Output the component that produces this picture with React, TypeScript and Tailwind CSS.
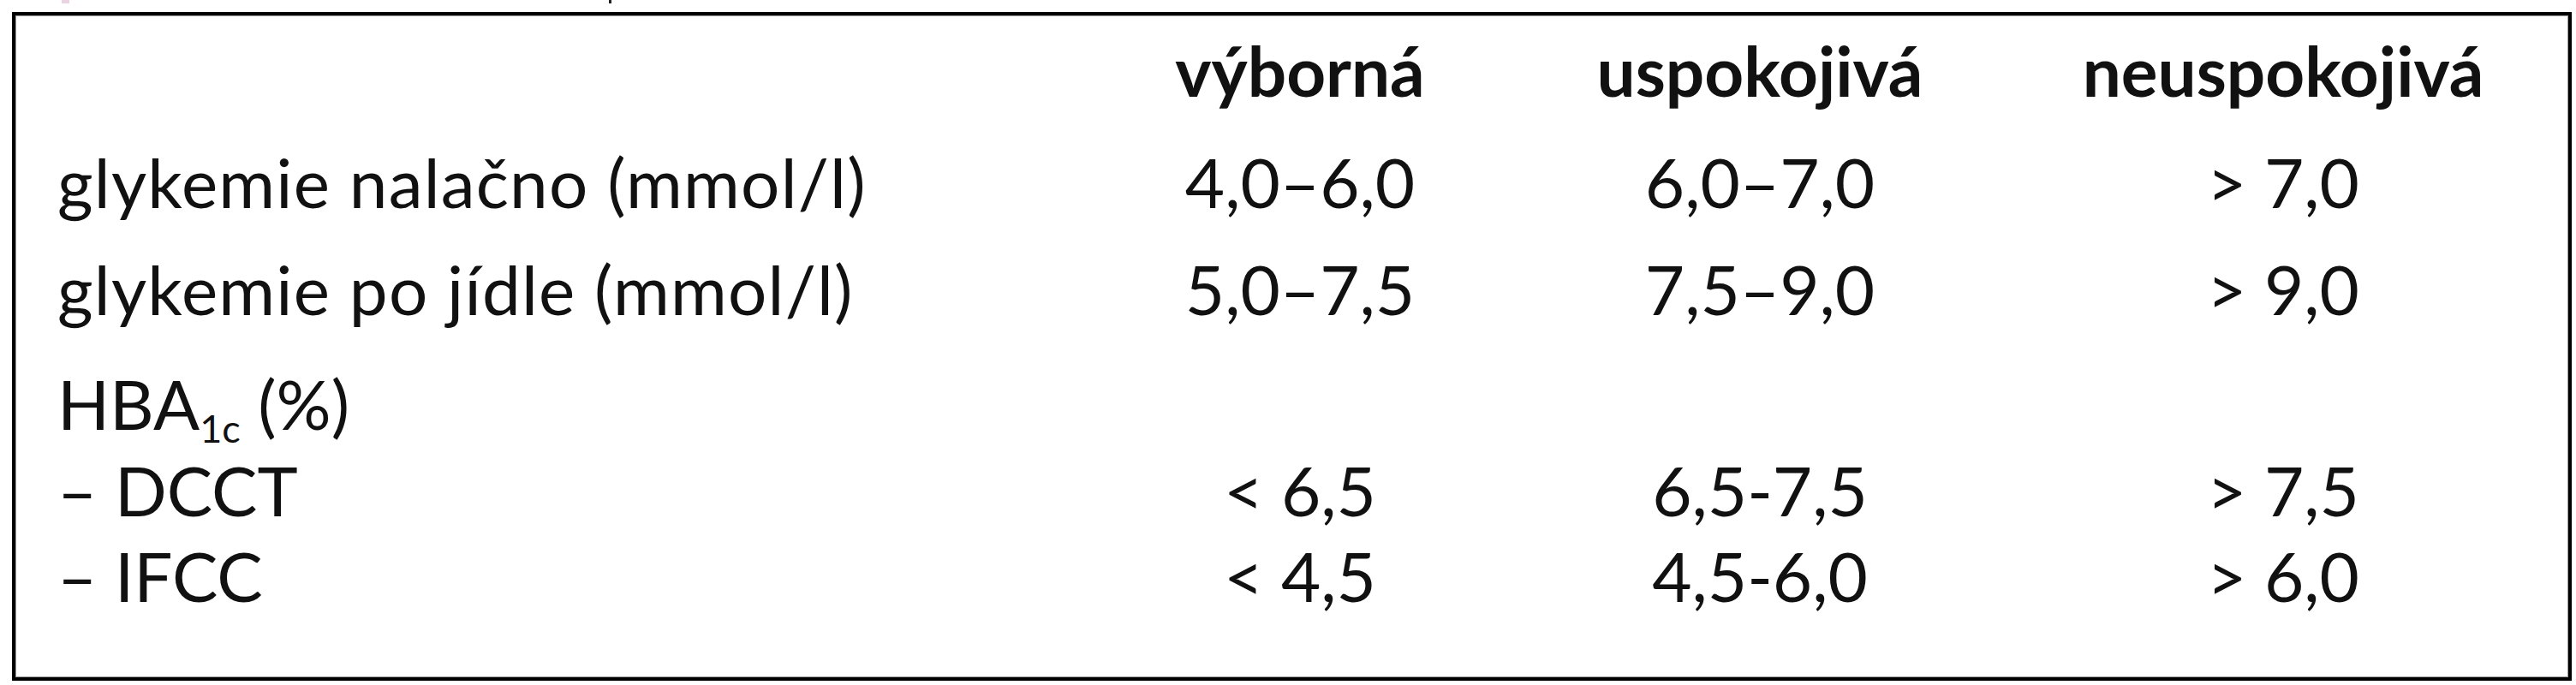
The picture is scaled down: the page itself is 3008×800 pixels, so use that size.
import React from "react";

const font = { fontFamily: "Lato, 'Noto Sans', sans-serif" };

type Row = { label: React.ReactNode; v: [string, string, string]; mt: string };

export default function App() {
  const rows: Row[] = [
    { label: "glykemie nalačno (mmol/l)", v: ["4,0–6,0", "6,0–7,0", "> 7,0"], mt: "mt-[30px]" },
    { label: "glykemie po jídle (mmol/l)", v: ["5,0–7,5", "7,5–9,0", "> 9,0"], mt: "mt-[25px]" },
  ];
  return (
    <div className="w-[3008px] h-[800px] bg-white text-[#111]" style={font}>
      <div className="h-[14px] flex items-start">
        <div className="ml-[72px] w-[9px] h-[4px] bg-[#ead3e2]" />
        <div className="ml-[630px] w-[3px] h-[4px] bg-[#222]" />
      </div>
      <div className="ml-[14px] w-[2989px] h-[781px] border-4 border-black shadow-[inset_0_0_0_1px_#9a9a9a] pt-[14px] pl-[49px]">
        <div className="grid grid-cols-[1183px_536px_538px_684px] h-[100px] leading-[100px] text-[80px] font-bold">
          <div />
          <div className="text-center">výborná</div>
          <div className="text-center">uspokojivá</div>
          <div className="text-center">neuspokojivá</div>
        </div>
        {rows.map((r, i) => (
          <div key={i} className={`grid grid-cols-[1183px_536px_538px_684px] h-[100px] leading-[100px] text-[80px] ${r.mt}`}>
            <div className="tracking-[1.2px]">{r.label}</div>
            <div className="text-center">{r.v[0]}</div>
            <div className="text-center">{r.v[1]}</div>
            <div className="text-center">{r.v[2]}</div>
          </div>
        ))}
        <div className="grid grid-cols-[1183px_536px_538px_684px] h-[100px] leading-[100px] text-[80px] mt-[34px]">
          <div>
            HBA<span className="text-[45px] align-[-15px]">1c</span> (%)
          </div>
          <div />
          <div />
          <div />
        </div>
        <div className="grid grid-cols-[1183px_536px_538px_684px] h-[100px] leading-[100px] text-[80px] mt-[1px]">
          <div>– DCCT</div>
          <div className="text-center">&lt; 6,5</div>
          <div className="text-center">6,5-7,5</div>
          <div className="text-center">&gt; 7,5</div>
        </div>
        <div className="grid grid-cols-[1183px_536px_538px_684px] h-[100px] leading-[100px] text-[80px]">
          <div>– IFCC</div>
          <div className="text-center">&lt; 4,5</div>
          <div className="text-center">4,5-6,0</div>
          <div className="text-center">&gt; 6,0</div>
        </div>
      </div>
    </div>
  );
}
